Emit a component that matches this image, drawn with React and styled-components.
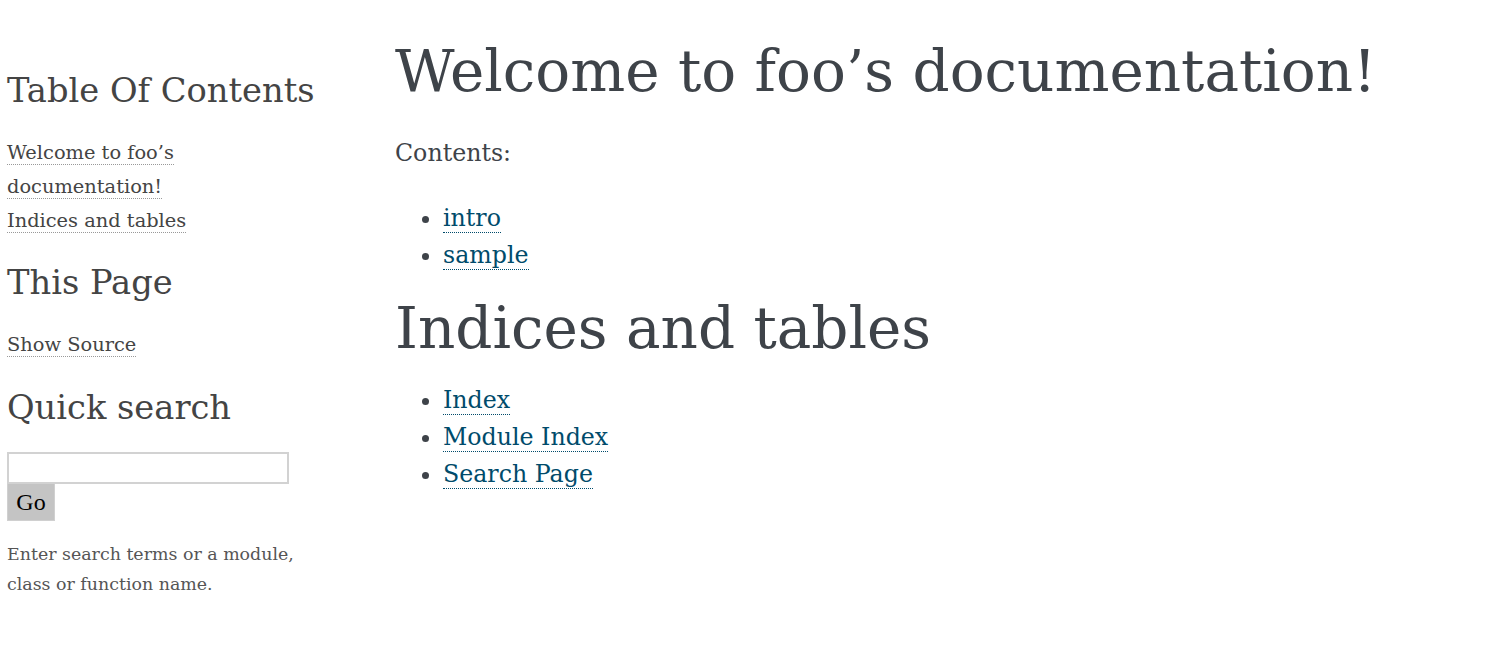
import React from 'react';
import styled, { createGlobalStyle } from 'styled-components';

const GlobalStyle = createGlobalStyle`
  body {
    margin: 0;
    background: #fff;
    font-family: "DejaVu Serif", "Liberation Serif", serif;
    color: #3e4349;
  }
`;

const App = () => {
  return (
    <>
      <GlobalStyle />
      <Page>
        <Sidebar>
          <SideTitle $top={71}>Table Of Contents</SideTitle>
          <SideList $top={25}>
            <li>
              <SideLink href='#'>Welcome to foo’s documentation!</SideLink>
            </li>
            <li>
              <SideLink href='#'>Indices and tables</SideLink>
            </li>
          </SideList>
          <SideTitle $top={25}>This Page</SideTitle>
          <SideList $top={25}>
            <li>
              <SideLink href='#'>Show Source</SideLink>
            </li>
          </SideList>
          <SideTitle $top={26}>Quick search</SideTitle>
          <SearchForm>
            <SearchInput type='text' />
            <GoButton type='button'>Go</GoButton>
          </SearchForm>
          <Hint>
            Enter search terms or a module,
            <br />
            class or function name.
          </Hint>
        </Sidebar>
        <Main>
          <Heading $top={36}>Welcome to foo’s documentation!</Heading>
          <Caption>Contents:</Caption>
          <BulletList $top={30}>
            <li>
              <Link href='#'>intro</Link>
            </li>
            <li>
              <Link href='#'>sample</Link>
            </li>
          </BulletList>
          <Heading $top={19}>Indices and tables</Heading>
          <BulletList $top={19}>
            <li>
              <Link href='#'>Index</Link>
            </li>
            <li>
              <Link href='#'>Module Index</Link>
            </li>
            <li>
              <Link href='#'>Search Page</Link>
            </li>
          </BulletList>
        </Main>
      </Page>
    </>
  );
};

const Page = styled.div`
  display: flex;
  align-items: flex-start;
  padding-left: 7px;
`;

const Sidebar = styled.div`
  width: 320px;
  flex-shrink: 0;
  color: #444;
`;

const SideTitle = styled.h3`
  margin: ${(p) => p.$top}px 0 0;
  font-size: 33.7px;
  font-weight: normal;
  line-height: 40px;
  color: #444;
`;

const SideList = styled.ul`
  list-style: none;
  margin: ${(p) => p.$top}px 0 0;
  padding: 0;
  width: 190px;
  font-size: 19.4px;
  line-height: 34px;
`;

const SideLink = styled.a`
  color: #444;
  text-decoration: none;
  border-bottom: 1px dotted #999;
`;

const SearchForm = styled.div`
  margin-top: 24px;
  display: flex;
  flex-direction: column;
  align-items: flex-start;
`;

const SearchInput = styled.input`
  box-sizing: border-box;
  width: 282px;
  height: 32px;
  margin: 0;
  border: 2px solid #d2d2d2;
  outline: none;
`;

const GoButton = styled.button`
  box-sizing: border-box;
  width: 48px;
  height: 37px;
  margin: 0;
  padding: 0;
  border: 1px solid #d0d0d0;
  border-top: none;
  background: #c4c4c4;
  color: #000;
  font-family: "Liberation Serif", serif;
  font-size: 24px;
`;

const Hint = styled.p`
  margin: 18px 0 0;
  font-size: 17.4px;
  line-height: 30px;
  color: #555;
`;

const Main = styled.div`
  margin-left: 68px;
`;

const Heading = styled.h1`
  margin: ${(p) => p.$top}px 0 0;
  font-size: 58px;
  font-weight: normal;
  line-height: 70px;
  color: #3e4349;
  white-space: nowrap;
`;

const Caption = styled.p`
  margin: 30px 0 0;
  font-size: 23.7px;
  line-height: 34px;
`;

const BulletList = styled.ul`
  margin: ${(p) => p.$top}px 0 0;
  padding-left: 48px;
  font-size: 23.7px;
  line-height: 37px;
`;

const Link = styled.a`
  color: #004b6b;
  text-decoration: none;
  border-bottom: 1px dotted #004b6b;
`;

export default App;
